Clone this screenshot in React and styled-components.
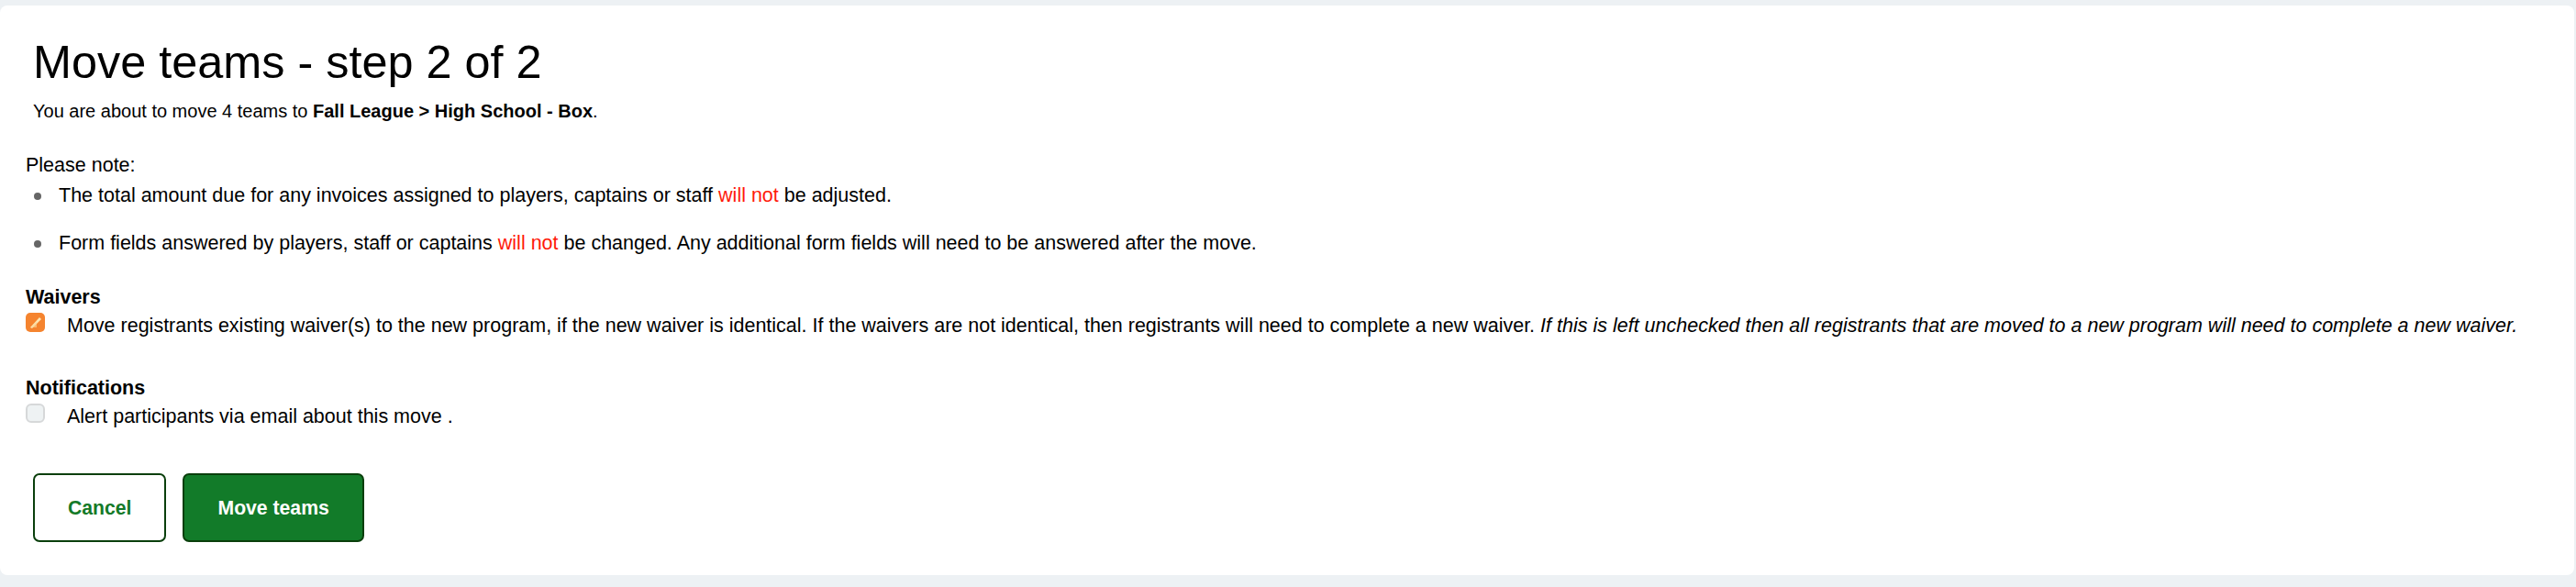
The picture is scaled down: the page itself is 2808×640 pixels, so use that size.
import styled, { createGlobalStyle } from "styled-components"

const GlobalStyle = createGlobalStyle`
  html, body {
    margin: 0;
    padding: 0;
    background-color: #edf1f4;
    font-family: "Liberation Sans", Arial, Helvetica, sans-serif;
    color: #000;
  }
`

const Page = styled.div`
  min-height: 640px;
  box-sizing: border-box;
  padding: 6px 2px 11px 0;
`

const Card = styled.div`
  background-color: #fff;
  border-radius: 8px;
  padding: 32px 28px 36px 28px;
`

const Header = styled.div`
  padding-left: 8px;
`

const Title = styled.h1`
  margin: 0;
  font-size: 50.4px;
  font-weight: 400;
  line-height: 60px;
`

const Lead = styled.p`
  margin: 8px 0 0;
  font-size: 20px;
  line-height: 31px;

  strong {
    font-weight: 700;
  }
`

const Text = styled.p`
  margin: ${({ $top }) => $top || 0}px 0 0;
  font-size: 21.5px;
  line-height: 31px;
`

const NoteList = styled.ul`
  list-style: none;
  margin: 2px 0 0;
  padding: 0;
`

const NoteItem = styled.li`
  display: flex;
  align-items: center;
  font-size: 21.5px;
  line-height: 31px;

  & + & {
    margin-top: 21px;
  }
`

const Dot = styled.span`
  flex: none;
  width: 8px;
  height: 8px;
  border-radius: 50%;
  background-color: #666;
  margin: 0 19px 0 9px;
`

const Warn = styled.span`
  color: #ff1a0a;
`

const SectionTitle = styled.h3`
  margin: ${({ $top }) => $top}px 0 0;
  font-size: 21.5px;
  font-weight: 700;
  line-height: 31px;
`

const CheckRow = styled.label`
  display: flex;
  align-items: flex-start;
  gap: 24px;
  font-size: 21.5px;
  line-height: 31px;

  em {
    font-style: italic;
  }
`

const Box = styled.span`
  flex: none;
  width: 21px;
  height: 21px;
  margin-top: 1px;
  display: flex;

  svg {
    display: block;
  }
`

const Actions = styled.div`
  display: flex;
  gap: 18px;
  margin-top: 46px;
  padding-left: 8px;
`

const Button = styled.button`
  height: 75px;
  padding: 0 36px;
  border-radius: 7px;
  border: 2px solid #0a3f0c;
  font-family: "Liberation Sans", Arial, sans-serif;
  font-size: 21.2px;
  font-weight: 700;
  cursor: pointer;
  background-color: ${({ $primary }) => ($primary ? "#127b29" : "#fff")};
  color: ${({ $primary }) => ($primary ? "#fff" : "#147a28")};
`

const CheckedBox = () => (
  <svg width="21" height="21" viewBox="0 0 21 21">
    <rect x="0" y="0" width="21" height="21" rx="5" fill="#f5842f" />
    <path d="M5 16 L15 5 L17 7 L7 17 Z" fill="#fde7b3" />
    <path d="M5 16 L12 9 L12 16 Z" fill="#fbd79a" opacity="0.6" />
  </svg>
)

const EmptyBox = () => (
  <svg width="21" height="21" viewBox="0 0 21 21">
    <rect x="1" y="1" width="19" height="19" rx="5" fill="#eef2f3" stroke="#d6d8d9" strokeWidth="2" />
  </svg>
)

const App = () => {
  return (
    <>
      <GlobalStyle />
      <Page>
        <Card>
          <Header>
            <Title>Move teams - step 2 of 2</Title>
            <Lead>
              You are about to move 4 teams to <strong>Fall League &gt; High School - Box</strong>.
            </Lead>
          </Header>

          <Text $top={28}>Please note:</Text>
          <NoteList>
            <NoteItem>
              <Dot />
              <span>
                The total amount due for any invoices assigned to players, captains or staff <Warn>will not</Warn> be adjusted.
              </span>
            </NoteItem>
            <NoteItem>
              <Dot />
              <span>
                Form fields answered by players, staff or captains <Warn>will not</Warn> be changed. Any additional form fields will need to be answered after the move.
              </span>
            </NoteItem>
          </NoteList>

          <SectionTitle $top={28}>Waivers</SectionTitle>
          <CheckRow>
            <Box><CheckedBox /></Box>
            <span>
              Move registrants existing waiver(s) to the new program, if the new waiver is identical. If the waivers are not identical, then registrants will need to complete a new waiver.{" "}
              <em>If this is left unchecked then all registrants that are moved to a new program will need to complete a new waiver.</em>
            </span>
          </CheckRow>

          <SectionTitle $top={37}>Notifications</SectionTitle>
          <CheckRow>
            <Box><EmptyBox /></Box>
            <span>Alert participants via email about this move .</span>
          </CheckRow>

          <Actions>
            <Button>Cancel</Button>
            <Button $primary>Move teams</Button>
          </Actions>
        </Card>
      </Page>
    </>
  )
}

export default App
